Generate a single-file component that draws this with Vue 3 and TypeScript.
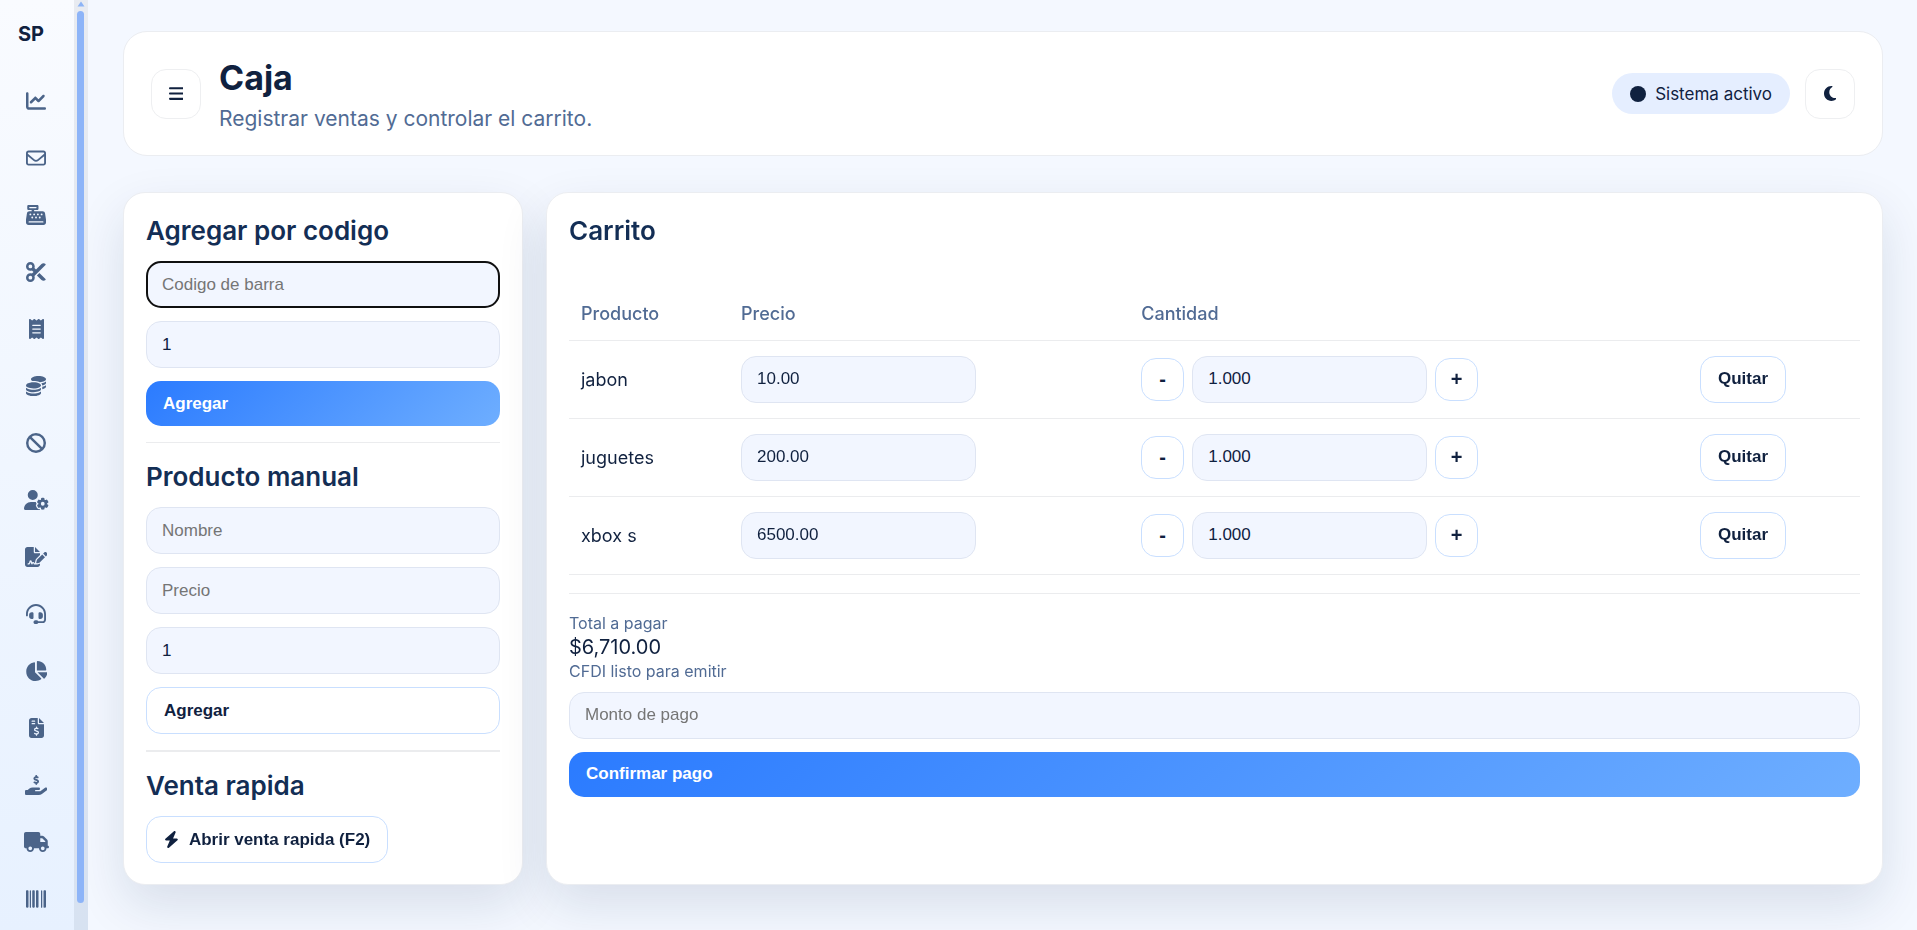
<script setup lang="ts">
import { computed, onMounted, ref } from 'vue'

interface Icon {
  label: string
  width: number
  path: string
}

interface CartItem {
  id: number
  name: string
  price: string
  quantity: string
}

const navItems: Icon[] = [
  {
    label: 'Panel',
    width: 512,
    path: 'M64 64c0-17.7-14.3-32-32-32S0 46.3 0 64V400c0 44.2 35.8 80 80 80H480c17.7 0 32-14.3 32-32s-14.3-32-32-32H80c-8.8 0-16-7.2-16-16V64zm406.6 86.6c12.5-12.5 12.5-32.8 0-45.3s-32.8-12.5-45.3 0L320 210.7l-57.4-57.4c-12.5-12.5-32.8-12.5-45.3 0l-112 112c-12.5 12.5-12.5 32.8 0 45.3s32.8 12.5 45.3 0L240 221.3l57.4 57.4c12.5 12.5 32.8 12.5 45.3 0l128-128z',
  },
  {
    label: 'Mensajes',
    width: 512,
    path: 'M64 112c-8.8 0-16 7.2-16 16v22.1L220.5 291.7c20.7 17 50.4 17 71.1 0L464 150.1V128c0-8.8-7.2-16-16-16H64zM48 212.2V384c0 8.8 7.2 16 16 16H448c8.8 0 16-7.2 16-16V212.2L322 328.8c-38.4 31.5-93.7 31.5-132 0L48 212.2zM0 128C0 92.7 28.7 64 64 64H448c35.3 0 64 28.7 64 64V384c0 35.3-28.7 64-64 64H64c-35.3 0-64-28.7-64-64V128z',
  },
  {
    label: 'Caja',
    width: 512,
    path: 'M64 0C46.3 0 32 14.3 32 32V96c0 17.7 14.3 32 32 32h80v32H87c-31.6 0-58.5 23.1-63.3 54.4L1.1 364.1C.4 368.8 0 373.6 0 378.4V448c0 35.3 28.7 64 64 64H448c35.3 0 64-28.7 64-64V378.4c0-4.8-.4-9.6-1.1-14.4L488.2 214.4C483.5 183.1 456.6 160 425 160H208V128h80c17.7 0 32-14.3 32-32V32c0-17.7-14.3-32-32-32H64zM96 48H256c8.8 0 16 7.2 16 16s-7.2 16-16 16H96c-8.8 0-16-7.2-16-16s7.2-16 16-16zM64 432c0-8.8 7.2-16 16-16H432c8.8 0 16 7.2 16 16s-7.2 16-16 16H80c-8.8 0-16-7.2-16-16zm48-168a24 24 0 1 1 0-48 24 24 0 1 1 0 48zm120-24a24 24 0 1 1 -48 0 24 24 0 1 1 48 0zM160 344a24 24 0 1 1 0-48 24 24 0 1 1 0 48zM328 240a24 24 0 1 1 -48 0 24 24 0 1 1 48 0zM256 344a24 24 0 1 1 0-48 24 24 0 1 1 0 48zM424 240a24 24 0 1 1 -48 0 24 24 0 1 1 48 0zM352 344a24 24 0 1 1 0-48 24 24 0 1 1 0 48z',
  },
  {
    label: 'Cortes',
    width: 512,
    path: 'M256 192l-39.5-39.5c4.9-12.6 7.5-26.2 7.5-40.5C224 50.1 173.9 0 112 0S0 50.1 0 112s50.1 112 112 112c14.3 0 27.9-2.7 40.5-7.5L192 256l-39.5 39.5c-12.6-4.9-26.2-7.5-40.5-7.5C50.1 288 0 338.1 0 400s50.1 112 112 112s112-50.1 112-112c0-14.3-2.7-27.9-7.5-40.5L499.2 76.8c7.1-7.1 7.1-18.5 0-25.6c-28.3-28.3-74.1-28.3-102.4 0L256 192zm22.6 150.6L396.8 460.8c28.3 28.3 74.1 28.3 102.4 0c7.1-7.1 7.1-18.5 0-25.6L342.6 278.6l-64 64zM64 112a48 48 0 1 1 96 0 48 48 0 1 1 -96 0zm48 240a48 48 0 1 1 0 96 48 48 0 1 1 0-96z',
  },
  {
    label: 'Tickets',
    width: 384,
    path: 'M14 2.2C22.5-1.7 32.5-.3 39.6 5.8L80 40.4 120.4 5.8c9-7.7 22.3-7.7 31.2 0L192 40.4 232.4 5.8c9-7.7 22.3-7.7 31.2 0L304 40.4 344.4 5.8c7.1-6.1 17.1-7.5 25.6-3.6s14 12.4 14 21.8V488c0 9.4-5.5 17.9-14 21.8s-18.5 2.5-25.6-3.6L304 471.6l-40.4 34.6c-9 7.7-22.3 7.7-31.2 0L192 471.6l-40.4 34.6c-9 7.7-22.3 7.7-31.2 0L80 471.6 39.6 506.2c-7.1 6.1-17.1 7.5-25.6 3.6S0 497.4 0 488V24C0 14.6 5.5 6.1 14 2.2zM96 144c-8.8 0-16 7.2-16 16s7.2 16 16 16H288c8.8 0 16-7.2 16-16s-7.2-16-16-16H96zM80 352c0 8.8 7.2 16 16 16H288c8.8 0 16-7.2 16-16s-7.2-16-16-16H96c-8.8 0-16 7.2-16 16zM96 240c-8.8 0-16 7.2-16 16s7.2 16 16 16H288c8.8 0 16-7.2 16-16s-7.2-16-16-16H96z',
  },
  {
    label: 'Movimientos',
    width: 512,
    path: 'M512 80c0 18-14.3 34.6-38.4 48c-29.1 16.1-72.5 27.5-122.3 30.9c-3.7-1.8-7.4-3.5-11.3-5C300.6 137.4 248.2 128 192 128c-8.3 0-16.4 .2-24.5 .6l-1.1-.6C142.3 114.6 128 98 128 80c0-44.2 86-80 192-80S512 35.8 512 80zM160.7 161.1c10.2-.7 20.7-1.1 31.3-1.1c62.2 0 117.4 12.3 152.5 31.4C369.3 204.9 384 221.7 384 240c0 4-.7 7.9-2.1 11.7c-4.6 13.2-17 25.3-35 35.5c0 0 0 0 0 0c-.1 .1-.3 .1-.4 .2l0 0 0 0c-.3 .2-.6 .3-.9 .5c-35 19.4-90.8 32-153.6 32c-59.6 0-112.9-11.3-148.2-29.1c-1.9-.9-3.7-1.9-5.5-2.9C14.3 274.6 0 258 0 240c0-34.8 53.4-64.5 128-75.4c10.5-1.5 21.4-2.7 32.7-3.5zM416 240c0-21.9-10.6-39.9-24.1-53.4c28.3-4.4 54.2-11.4 76.2-20.5c16.3-6.8 31.5-15.2 43.9-25.5V176c0 19.3-16.5 37.1-43.8 50.9c-14.6 7.4-32.4 13.7-52.4 18.5c.1-1.8 .2-3.5 .2-5.3zm-32 96c0 18-14.3 34.6-38.4 48c-1.8 1-3.6 1.9-5.5 2.9C304.9 404.7 251.6 416 192 416c-62.8 0-118.6-12.6-153.6-32C14.3 370.6 0 354 0 336V300.6c12.5 10.3 27.6 18.7 43.9 25.5C83.4 342.6 135.8 352 192 352s108.6-9.4 148.1-25.9c7.8-3.2 15.3-6.9 22.4-10.9c6.1-3.4 11.8-7.2 17.2-11.2c1.5-1.1 2.9-2.3 4.3-3.4V304v5.7V336zm32 0V304 278.1c19-4.2 36.5-9.5 52.1-16c16.3-6.8 31.5-15.2 43.9-25.5V272c0 10.5-5 21-14.9 30.9c-16.3 16.3-45 29.7-81.3 38.4c.1-1.7 .2-3.5 .2-5.3zM192 448c56.2 0 108.6-9.4 148.1-25.9c16.3-6.8 31.5-15.2 43.9-25.5V432c0 44.2-86 80-192 80S0 476.2 0 432V396.6c12.5 10.3 27.6 18.7 43.9 25.5C83.4 438.6 135.8 448 192 448z',
  },
  {
    label: 'Cancelaciones',
    width: 512,
    path: 'M367.2 412.5L99.5 144.8C77.1 176.1 64 214.5 64 256c0 106 86 192 192 192c41.5 0 79.9-13.1 111.2-35.5zm45.3-45.3C434.9 335.9 448 297.5 448 256c0-106-86-192-192-192c-41.5 0-79.9 13.1-111.2 35.5L412.5 367.2zM0 256a256 256 0 1 1 512 0A256 256 0 1 1 0 256z',
  },
  {
    label: 'Usuarios',
    width: 640,
    path: 'M224 0a128 128 0 1 1 0 256A128 128 0 1 1 224 0zM178.3 304h91.4c11.8 0 23.4 1.2 34.5 3.3c-2.1 18.5 7.4 35.6 21.8 44.8c-16.6 10.6-26.7 31.6-20 53.3c4 12.9 9.4 25.5 16.4 37.6s15.2 23.1 24.4 33c15.7 16.9 39.6 18.4 57.2 8.7v.9c0 9.2 2.7 18.5 7.9 26.3H29.7C13.3 512 0 498.7 0 482.3C0 383.8 79.8 304 178.3 304zM436 218.2c0-7 4.5-13.3 11.3-14.8c10.5-2.4 21.5-3.7 32.7-3.7s22.2 1.3 32.7 3.7c6.8 1.5 11.3 7.8 11.3 14.8v17.7c0 7.8 4.8 14.8 11.6 18.7c6.8 3.9 15.1 4.5 21.8 .6l13.8-7.9c6.1-3.5 13.7-2.7 18.5 2.4c7.6 8.1 14.3 17.2 20.1 27.2s10.3 20.4 13.5 31c2.1 6.7-1.1 13.7-7.2 17.2l-14.4 8.3c-6.5 3.7-10 10.9-10 18.4s3.5 14.7 10 18.4l14.4 8.3c6.1 3.5 9.2 10.5 7.2 17.2c-3.3 10.6-7.8 21-13.5 31s-12.5 19.1-20.1 27.2c-4.8 5.1-12.5 5.9-18.5 2.4l-13.8-7.9c-6.7-3.9-15.1-3.3-21.8 .6c-6.8 3.9-11.6 10.9-11.6 18.7v17.7c0 7-4.5 13.3-11.3 14.8c-10.5 2.4-21.5 3.7-32.7 3.7s-22.2-1.3-32.7-3.7c-6.8-1.5-11.3-7.8-11.3-14.8V467.8c0-7.9-4.9-14.9-11.7-18.9c-6.8-3.9-15.2-4.5-22-.6l-13.5 7.8c-6.1 3.5-13.7 2.7-18.5-2.4c-7.6-8.1-14.3-17.2-20.1-27.2s-10.3-20.4-13.5-31c-2.1-6.7 1.1-13.7 7.2-17.2l14-8.1c6.5-3.8 10.1-11.1 10.1-18.6s-3.5-14.8-10.1-18.6l-14-8.1c-6.1-3.5-9.2-10.5-7.2-17.2c3.3-10.6 7.7-21 13.5-31s12.5-19.1 20.1-27.2c4.8-5.1 12.4-5.9 18.5-2.4l13.6 7.8c6.8 3.9 15.2 3.3 22-.6c6.9-3.9 11.7-11 11.7-18.9V218.2zm92.1 133.5a48.1 48.1 0 1 0 -96.1 0 48.1 48.1 0 1 0 96.1 0z',
  },
  {
    label: 'Contratos',
    width: 576,
    path: 'M64 0C28.7 0 0 28.7 0 64V448c0 35.3 28.7 64 64 64H320c35.3 0 64-28.7 64-64V428.7c-2.7 1.1-5.4 2-8.2 2.7l-60.1 15c-3 .7-6 1.2-9 1.4c-.9 .1-1.8 .2-2.7 .2H240c-6.1 0-11.6-3.4-14.3-8.8l-8.8-17.7c-1.7-3.4-5.1-5.5-8.8-5.5s-7.2 2.1-8.8 5.5l-8.8 17.7c-2.9 5.9-9.2 9.4-15.7 8.8s-12.1-5.1-13.9-11.3L144 381l-9.8 32.8c-6.1 20.3-24.8 34.2-46 34.2H80c-8.8 0-16-7.2-16-16s7.2-16 16-16h8.2c7.1 0 13.3-4.6 15.3-11.4l14.9-49.5c3.4-11.3 13.8-19.1 25.6-19.1s22.2 7.7 25.6 19.1l11.6 38.6c7.4-6.2 16.8-9.7 26.8-9.7c15.9 0 30.4 9 37.5 23.2l4.4 8.8h8.9c-3.1-8.8-3.7-18.4-1.4-27.8l15-60.1c2.8-11.3 8.6-21.5 16.8-29.7L384 203.6V160H256c-17.7 0-32-14.3-32-32V0H64zM256 0V128H384L256 0zM549.8 139.7c-15.6-15.6-40.9-15.6-56.6 0l-29.4 29.4 71 71 29.4-29.4c15.6-15.6 15.6-40.9 0-56.6l-14.4-14.4zM311.9 321c-4.1 4.1-7 9.2-8.4 14.9l-15 60.1c-1.4 5.5 .2 11.2 4.2 15.2s9.7 5.6 15.2 4.2l60.1-15c5.6-1.4 10.8-4.3 14.9-8.4L512.1 262.7l-71-71L311.9 321z',
  },
  {
    label: 'Soporte',
    width: 512,
    path: 'M256 48C141.1 48 48 141.1 48 256v40c0 13.3-10.7 24-24 24s-24-10.7-24-24V256C0 114.6 114.6 0 256 0S512 114.6 512 256V400.1c0 48.6-39.4 88-88.1 88L313.6 488c-8.3 14.3-23.8 24-41.6 24H240c-26.5 0-48-21.5-48-48s21.5-48 48-48h32c17.8 0 33.3 9.7 41.6 24l110.4 .1c22.1 0 40-17.9 40-40V256c0-114.9-93.1-208-208-208zM144 208h16c17.7 0 32 14.3 32 32V352c0 17.7-14.3 32-32 32H144c-35.3 0-64-28.7-64-64V272c0-35.3 28.7-64 64-64zm224 0c35.3 0 64 28.7 64 64v48c0 35.3-28.7 64-64 64H352c-17.7 0-32-14.3-32-32V240c0-17.7 14.3-32 32-32h16z',
  },
  {
    label: 'Reportes',
    width: 576,
    path: 'M304 240V16.6c0-9 7-16.6 16-16.6C443.7 0 544 100.3 544 224c0 9-7.6 16-16.6 16H304zM32 272C32 150.7 122.1 50.3 239 34.3c9.2-1.3 17 6.1 17 15.4V288L412.5 444.5c6.7 6.7 6.2 17.7-1.5 23.1C371.8 495.6 323.8 512 272 512C139.5 512 32 404.6 32 272zm526.4 16c9.3 0 16.6 7.8 15.4 17c-7.7 55.9-34.6 105.6-73.9 142.3c-6 5.6-15.4 5.2-21.2-.7L320 288H558.4z',
  },
  {
    label: 'Facturas',
    width: 384,
    path: 'M64 0C28.7 0 0 28.7 0 64V448c0 35.3 28.7 64 64 64H320c35.3 0 64-28.7 64-64V160H256c-17.7 0-32-14.3-32-32V0H64zM256 0V128H384L256 0zM64 80c0-8.8 7.2-16 16-16h64c8.8 0 16 7.2 16 16s-7.2 16-16 16H80c-8.8 0-16-7.2-16-16zm0 64c0-8.8 7.2-16 16-16h64c8.8 0 16 7.2 16 16s-7.2 16-16 16H80c-8.8 0-16-7.2-16-16zm128 72c8.8 0 16 7.2 16 16v17.3c8.5 1.2 16.7 3.1 24.1 5.1c8.5 2.3 13.6 11 11.3 19.6s-11 13.6-19.6 11.3c-11.1-3-22-5.2-32.1-5.3c-8.4-.1-17.4 1.8-23.6 5.5c-5.7 3.4-8.1 7.3-8.1 12.8c0 3.7 1.3 6.5 7.3 10.1c6.9 4.1 16.6 7.1 29.2 10.9l.5 .1c11.3 3.4 25.3 7.6 36.3 14.6c12.1 7.6 22.4 19.7 22.7 38.2c.3 19.3-9.6 33.3-22.9 41.6c-7.7 4.8-16.4 7.6-25.1 9.1V440c0 8.8-7.2 16-16 16s-16-7.2-16-16V422.2c-11.2-2.1-21.7-5.7-30.9-8.9c-2.1-.7-4.2-1.4-6.2-2.1c-8.4-2.8-12.9-11.9-10.1-20.2s11.9-12.9 20.2-10.1c2.5 .8 4.8 1.6 7.1 2.4c13.6 4.6 24.6 8.4 36.3 8.7c9.1 .3 17.9-1.7 23.7-5.3c5.1-3.2 7.9-7.3 7.8-14c-.1-4.6-1.8-7.8-7.7-11.6c-6.8-4.3-16.5-7.4-29-11.2l-1.6-.5c-11-3.3-24.3-7.3-34.8-13.7c-12-7.2-22.6-18.9-22.7-37.3c-.1-19.4 10.8-32.8 23.8-40.5c7.5-4.4 15.8-7.2 24.1-8.7V232c0-8.8 7.2-16 16-16z',
  },
  {
    label: 'Pagos',
    width: 576,
    path: 'M312 24V34.5c6.4 1.2 12.6 2.7 18.2 4.2c12.8 3.4 20.4 16.6 17 29.4s-16.6 20.4-29.4 17c-10.9-2.9-21.1-4.9-30.2-5c-7.3-.1-14.7 1.7-19.4 4.4c-2.1 1.3-3.1 2.4-3.5 3c-.3 .5-.7 1.2-.7 2.8c0 .3 0 .5 0 .6c.2 .2 .9 1.2 3.3 2.6c5.8 3.5 14.4 6.2 27.4 10.1l.9 .3c11.1 3.3 25.9 7.8 37.9 15.3c13.7 8.6 26.1 22.9 26.4 44.9c.3 22.5-11.4 38.9-26.7 48.5c-6.7 4.1-13.9 7-21.3 8.8V232c0 13.3-10.7 24-24 24s-24-10.7-24-24V220.6c-9.5-2.3-18.2-5.3-25.6-7.8c-2.1-.7-4.1-1.4-6-2c-12.6-4.2-19.4-17.8-15.2-30.4s17.8-19.4 30.4-15.2c2.6 .9 5 1.7 7.3 2.5c13.6 4.6 23.4 7.9 33.9 8.3c8 .3 15.1-1.6 19.2-4.1c1.9-1.2 2.8-2.2 3.2-2.9c.4-.6 .9-1.8 .8-4.1l0-.2c0-1 0-2.1-4-4.6c-5.7-3.6-14.3-6.4-27.1-10.3l-1.9-.6c-10.8-3.2-25-7.5-36.4-14.4c-13.5-8.1-26.5-22-26.6-44.1c-.1-22.9 12.9-38.6 27.7-47.4c6.4-3.8 13.3-6.4 20.2-8.2V24c0-13.3 10.7-24 24-24s24 10.7 24 24zM568.2 336.3c13.1 17.8 9.3 42.8-8.5 55.9L433.1 485.5c-23.4 17.2-51.6 26.5-80.7 26.5H192 32c-17.7 0-32-14.3-32-32V416c0-17.7 14.3-32 32-32H68.8l44.9-36c22.7-18.2 50.9-28 80-28H272h16 64c17.7 0 32 14.3 32 32s-14.3 32-32 32H288 272c-8.8 0-16 7.2-16 16s7.2 16 16 16H392.6l119.7-88.2c17.8-13.1 42.8-9.3 55.9 8.5z',
  },
  {
    label: 'Proveedores',
    width: 640,
    path: 'M48 0C21.5 0 0 21.5 0 48V368c0 26.5 21.5 48 48 48H64c0 53 43 96 96 96s96-43 96-96H384c0 53 43 96 96 96s96-43 96-96h32c17.7 0 32-14.3 32-32s-14.3-32-32-32V288 256 237.3c0-17-6.7-33.3-18.7-45.3L512 114.7c-12-12-28.3-18.7-45.3-18.7H416V48c0-26.5-21.5-48-48-48H48zM416 160h50.7L544 237.3V256H416V160zM112 416a48 48 0 1 1 96 0 48 48 0 1 1 -96 0zm368-48a48 48 0 1 1 0 96 48 48 0 1 1 0-96z',
  },
  {
    label: 'Codigos de barra',
    width: 512,
    path: 'M24 32C10.7 32 0 42.7 0 56V456c0 13.3 10.7 24 24 24H40c13.3 0 24-10.7 24-24V56c0-13.3-10.7-24-24-24H24zm88 0c-8.8 0-16 7.2-16 16V464c0 8.8 7.2 16 16 16s16-7.2 16-16V48c0-8.8-7.2-16-16-16zm72 0c-13.3 0-24 10.7-24 24V456c0 13.3 10.7 24 24 24h16c13.3 0 24-10.7 24-24V56c0-13.3-10.7-24-24-24H184zm96 0c-13.3 0-24 10.7-24 24V456c0 13.3 10.7 24 24 24h16c13.3 0 24-10.7 24-24V56c0-13.3-10.7-24-24-24H280zM448 56V456c0 13.3 10.7 24 24 24h16c13.3 0 24-10.7 24-24V56c0-13.3-10.7-24-24-24H472c-13.3 0-24 10.7-24 24zm-64-8V464c0 8.8 7.2 16 16 16s16-7.2 16-16V48c0-8.8-7.2-16-16-16s-16 7.2-16 16z',
  },
]

const cart = ref<CartItem[]>([
  { id: 1, name: 'jabon', price: '10.00', quantity: '1.000' },
  { id: 2, name: 'juguetes', price: '200.00', quantity: '1.000' },
  { id: 3, name: 'xbox s', price: '6500.00', quantity: '1.000' },
])

const barcode = ref('')
const barcodeQuantity = ref('1')
const manualName = ref('')
const manualPrice = ref('')
const manualQuantity = ref('1')
const payment = ref('')
const barcodeInput = ref<HTMLInputElement | null>(null)

const total = computed(() => {
  const sum = cart.value.reduce((acc, item) => acc + Number(item.price) * Number(item.quantity), 0)
  return '$' + sum.toLocaleString('en-US', { minimumFractionDigits: 2, maximumFractionDigits: 2 })
})

function changeQuantity(item: CartItem, step: number) {
  item.quantity = Math.max(0, Number(item.quantity) + step).toFixed(3)
}

function removeItem(id: number) {
  cart.value = cart.value.filter((item) => item.id !== id)
}

function addManual() {
  if (!manualName.value || !manualPrice.value) return
  cart.value.push({
    id: Date.now(),
    name: manualName.value,
    price: Number(manualPrice.value).toFixed(2),
    quantity: Number(manualQuantity.value).toFixed(3),
  })
}

onMounted(() => barcodeInput.value?.focus())
</script>

<template>
  <div class="layout">
    <aside class="sidebar">
      <div class="sidebar-content">
        <div class="brand">SP</div>
        <nav class="nav" aria-label="Principal">
          <a v-for="item in navItems" :key="item.label" href="#" class="nav-link" :aria-label="item.label">
            <svg class="icon" :viewBox="`0 0 ${item.width} 512`" aria-hidden="true">
              <path :d="item.path" />
            </svg>
          </a>
        </nav>
      </div>
      <div class="scrollbar" aria-hidden="true">
        <svg class="scroll-arrow" viewBox="0 0 8 6"><path d="M4 0.5 L7.5 5.5 H0.5 Z" /></svg>
        <div class="scroll-thumb"></div>
      </div>
    </aside>

    <main class="main">
      <header class="topbar">
        <button type="button" class="icon-button" aria-label="Menu">
          <svg class="icon" viewBox="0 0 448 512" aria-hidden="true">
            <path d="M0 96C0 78.3 14.3 64 32 64H416c17.7 0 32 14.3 32 32s-14.3 32-32 32H32C14.3 128 0 113.7 0 96zM0 256c0-17.7 14.3-32 32-32H416c17.7 0 32 14.3 32 32s-14.3 32-32 32H32c-17.7 0-32-14.3-32-32zM448 416c0 17.7-14.3 32-32 32H32c-17.7 0-32-14.3-32-32s14.3-32 32-32H416c17.7 0 32 14.3 32 32z" />
          </svg>
        </button>
        <div class="heading">
          <h1>Caja</h1>
          <p>Registrar ventas y controlar el carrito.</p>
        </div>
        <div class="status"><span class="dot"></span>Sistema activo</div>
        <button type="button" class="icon-button" aria-label="Modo oscuro">
          <svg class="icon" viewBox="0 0 384 512" aria-hidden="true">
            <path d="M223.5 32C100 32 0 132.3 0 256S100 480 223.5 480c60.6 0 115.5-24.2 155.8-63.4c5-4.9 6.3-12.5 3.1-18.7s-10.1-9.7-17-8.5c-9.8 1.7-19.8 2.6-30.1 2.6c-96.9 0-175.5-78.8-175.5-176c0-65.8 36-123.1 89.3-153.3c6.1-3.5 9.2-10.5 7.7-17.3s-7.3-11.9-14.3-12.5c-6.3-.5-12.6-.8-19-.8z" />
          </svg>
        </button>
      </header>

      <div class="panels">
        <section class="card">
          <h2>Agregar por codigo</h2>
          <form class="stack" @submit.prevent>
            <input ref="barcodeInput" v-model="barcode" class="field" type="text" placeholder="Codigo de barra" aria-label="Codigo de barra" />
            <input v-model="barcodeQuantity" class="field" type="text" aria-label="Cantidad" />
            <button type="submit" class="btn primary">Agregar</button>
          </form>
          <hr />
          <h2>Producto manual</h2>
          <form class="stack" @submit.prevent="addManual">
            <input v-model="manualName" class="field" type="text" placeholder="Nombre" aria-label="Nombre" />
            <input v-model="manualPrice" class="field" type="text" placeholder="Precio" aria-label="Precio" />
            <input v-model="manualQuantity" class="field" type="text" aria-label="Cantidad manual" />
            <button type="submit" class="btn outline">Agregar</button>
          </form>
          <hr class="thick" />
          <h2>Venta rapida</h2>
          <button type="button" class="btn outline quick">
            <svg class="icon" viewBox="0 0 448 512" aria-hidden="true">
              <path d="M349.4 44.6c5.9-13.7 1.5-29.7-10.6-38.5s-28.6-8-39.9 1.8l-256 224c-10 8.8-13.6 22.9-8.9 35.3S50.7 288 64 288H175.5L98.6 467.4c-5.9 13.7-1.5 29.7 10.6 38.5s28.6 8 39.9-1.8l256-224c10-8.8 13.6-22.9 8.9-35.3s-16.6-20.7-30-20.7H272.5L349.4 44.6z" />
            </svg>
            Abrir venta rapida (F2)
          </button>
        </section>

        <section class="card">
          <h2>Carrito</h2>
          <table class="cart">
            <colgroup>
              <col class="col-product" />
              <col class="col-price" />
              <col />
              <col class="col-actions" />
            </colgroup>
            <thead>
              <tr>
                <th scope="col">Producto</th>
                <th scope="col">Precio</th>
                <th scope="col">Cantidad</th>
                <td></td>
              </tr>
            </thead>
            <tbody>
              <tr v-for="item in cart" :key="item.id">
                <td>{{ item.name }}</td>
                <td>
                  <input v-model="item.price" class="field compact" type="text" :aria-label="`Precio de ${item.name}`" />
                </td>
                <td>
                  <div class="quantity">
                    <button type="button" class="step" aria-label="Restar" @click="changeQuantity(item, -1)">-</button>
                    <input v-model="item.quantity" class="field compact" type="text" :aria-label="`Cantidad de ${item.name}`" />
                    <button type="button" class="step" aria-label="Sumar" @click="changeQuantity(item, 1)">+</button>
                  </div>
                </td>
                <td>
                  <button type="button" class="btn outline" @click="removeItem(item.id)">Quitar</button>
                </td>
              </tr>
            </tbody>
          </table>
          <hr />
          <div class="totals">
            <p class="muted">Total a pagar</p>
            <p class="amount">{{ total }}</p>
            <p class="muted">CFDI listo para emitir</p>
          </div>
          <form class="stack" @submit.prevent>
            <input v-model="payment" class="field" type="text" placeholder="Monto de pago" aria-label="Monto de pago" />
            <button type="submit" class="btn primary">Confirmar pago</button>
          </form>
        </section>
      </div>
    </main>
  </div>
</template>

<style>
body {
  margin: 0;
  background: #f4f8ff;
}
</style>

<style scoped>
* {
  box-sizing: border-box;
}

.layout {
  display: flex;
  min-height: 100vh;
  color: #10213f;
  background: #f4f8ff;
  font-family: Inter, "Noto Sans", sans-serif;
}

.icon {
  display: block;
  fill: currentColor;
}

.sidebar {
  position: sticky;
  top: 0;
  display: flex;
  flex: none;
  width: 88px;
  height: 100vh;
  overflow: hidden;
  background: linear-gradient(180deg, #f9fbff, #e7f1ff);
}

.sidebar-content {
  flex: 1;
}

.brand {
  padding: 20px 0 0 18px;
  font-size: 20px;
  font-weight: 700;
  line-height: 28px;
}

.nav {
  display: flex;
  flex-direction: column;
  gap: 13px;
  padding: 31px 2px 0 0;
}

.nav-link {
  display: flex;
  align-items: center;
  justify-content: center;
  height: 44px;
  color: #4b6489;
}

.nav-link .icon {
  height: 20px;
}

.scrollbar {
  display: flex;
  flex-direction: column;
  align-items: center;
  width: 14px;
  padding: 0 1px 27px 0;
  background: rgba(16, 33, 63, 0.07);
}

.scroll-arrow {
  flex: none;
  width: 8px;
  height: 6px;
  margin: 1px 0 4px;
  fill: #8db4f6;
}

.scroll-thumb {
  flex: 1;
  width: 7px;
  border-radius: 4px;
  background: #8db4f8;
}

.main {
  flex: 1;
  min-width: 0;
  padding: 31px 34px 35px 35px;
}

.topbar {
  display: flex;
  align-items: center;
  min-height: 125px;
  padding: 0 27px;
  border: 1px solid #ebedf1;
  border-radius: 24px;
  background: #fff;
}

.icon-button {
  display: flex;
  flex: none;
  align-items: center;
  justify-content: center;
  width: 50px;
  height: 50px;
  padding: 0;
  border: 1px solid #eeeff1;
  border-radius: 15px;
  background: #fff;
  color: #10213f;
}

.icon-button .icon {
  height: 17px;
}

.heading {
  flex: 1;
  padding-left: 18px;
}

h1 {
  margin: 0;
  font-size: 34px;
  font-weight: 700;
  line-height: 44px;
}

.heading p {
  margin: 6px 0 0;
  color: #516b94;
  font-size: 21px;
  line-height: 26px;
}

.status {
  display: flex;
  align-items: center;
  gap: 9px;
  height: 41px;
  margin-right: 15px;
  padding: 0 18px;
  border-radius: 21px;
  background: #e5eeff;
  font-size: 17px;
}

.dot {
  width: 16px;
  height: 16px;
  border-radius: 50%;
  background: #10213f;
}

.panels {
  display: grid;
  grid-template-columns: 400px minmax(0, 1fr);
  gap: 23px;
  margin-top: 36px;
}

.card {
  min-width: 0;
  padding: 21px 22px;
  border: 1px solid #ebedf1;
  border-radius: 22px;
  background: #fff;
  box-shadow: 0 20px 50px rgba(15, 40, 85, 0.12);
}

h2 {
  margin: 0 0 13px;
  color: #132e55;
  font-size: 26px;
  font-weight: 600;
  line-height: 34px;
}

.stack {
  display: flex;
  flex-direction: column;
  gap: 13px;
}

.field {
  width: 100%;
  height: 47px;
  padding: 0 15px;
  border: 1px solid #dfe5f2;
  border-radius: 15px;
  background: #f2f6ff;
  color: #10213f;
  font-family: "Liberation Sans", Arial, sans-serif;
  font-size: 17px;
}

.field::placeholder {
  color: #757575;
  opacity: 1;
}

.field:focus {
  outline: 2px solid #101010;
  outline-offset: -2px;
}

.compact {
  width: 235px;
}

.btn,
.step {
  font-family: "Liberation Sans", Arial, sans-serif;
  font-weight: 700;
}

.btn {
  display: flex;
  align-items: center;
  gap: 10px;
  height: 47px;
  padding: 0 17px;
  border-radius: 15px;
  font-size: 17px;
  text-align: left;
}

.primary {
  height: 45px;
  border: 0;
  background: linear-gradient(135deg, #2b7bff, #6eaeff);
  color: #fff;
}

.outline,
.step {
  border: 1px solid #c9dfff;
  background: #fff;
  color: #10213f;
}

.quick .icon {
  height: 17px;
}

hr {
  height: 1px;
  margin: 16px 0 17px;
  border: 0;
  background: #ebecee;
}

.thick {
  height: 2px;
}

.cart {
  width: 100%;
  margin: 40px 0 18px;
  border-collapse: collapse;
  table-layout: fixed;
  font-size: 18px;
}

.col-product {
  width: 160px;
}

.col-price {
  width: 31%;
}

.col-actions {
  width: 172px;
}

.cart th,
.cart td {
  height: 78px;
  padding: 0 12px;
  border-bottom: 1px solid #ebecee;
  text-align: left;
}

.cart th,
.cart thead td {
  height: 52px;
  color: #516b94;
  font-weight: 500;
}

.quantity {
  display: flex;
  align-items: center;
  gap: 8px;
}

.step {
  width: 43px;
  height: 43px;
  padding: 0;
  border-radius: 15px;
  font-size: 20px;
}

.totals {
  margin-bottom: 9px;
  line-height: 24px;
}

.totals p {
  margin: 0;
}

.muted {
  color: #516b94;
  font-size: 16px;
}

.amount {
  font-size: 20px;
}
</style>
